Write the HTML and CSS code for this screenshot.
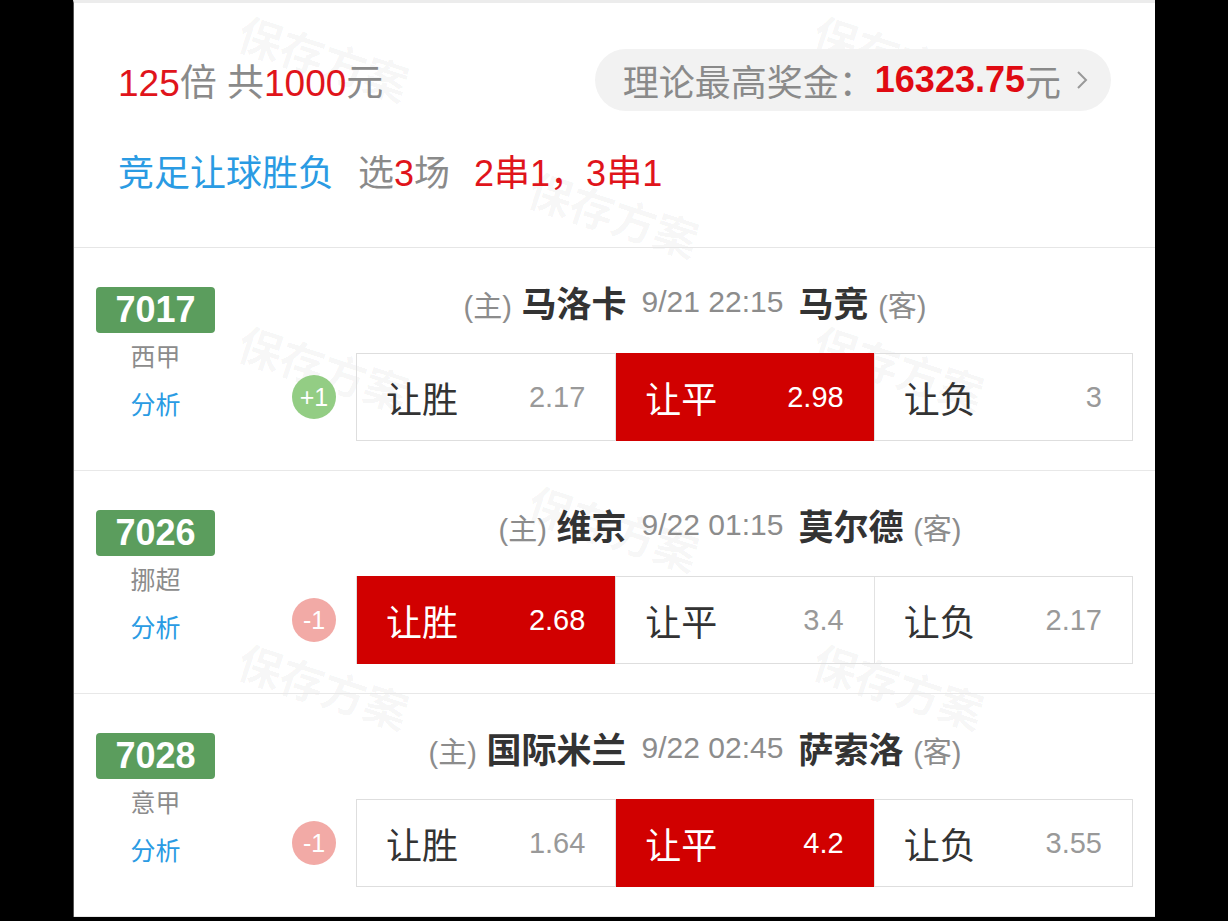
FILE: index.html
```html
<!DOCTYPE html>
<html lang="zh-CN">
<head>
    <meta charset="UTF-8">
    <meta name="viewport" content="width=device-width, initial-scale=1.0">
    <title>方案详情</title>
    <link rel="stylesheet" href="styles.css">
</head>
<body>
    <div class="page">
        <div class="watermarks" aria-hidden="true">
            <span class="wm wm-a">保存方案</span>
            <span class="wm wm-b">保存方案</span>
            <span class="wm wm-c">保存方案</span>
            <span class="wm wm-d">保存方案</span>
            <span class="wm wm-e">保存方案</span>
            <span class="wm wm-f">保存方案</span>
            <span class="wm wm-g">保存方案</span>
            <span class="wm wm-h">保存方案</span>
        </div>

        <section class="summary">
            <div class="summary-top">
                <div class="stake"><em>125</em>倍 共<em>1000</em>元</div>
                <a class="prize" href="#">
                    理论最高奖金：<strong>16323.75</strong>元
                    <svg class="chevron" viewBox="0 0 14 24" width="14" height="24">
                        <polyline points="3,4 11,12 3,20" fill="none" stroke="#999" stroke-width="2"/>
                    </svg>
                </a>
            </div>
            <div class="summary-type">
                <span class="play">竞足让球胜负</span>
                <span class="pick">选<em>3</em>场</span>
                <span class="pass">2串1，3串1</span>
            </div>
        </section>

        <div class="match">
            <div class="match-side">
                <span class="match-no">7017</span>
                <span class="league">西甲</span>
                <a class="analysis" href="#">分析</a>
            </div>
            <div class="match-main">
                <div class="match-title">
                    <span class="home"><i>(主)</i> 马洛卡</span>
                    <span class="time">9/21 22:15</span>
                    <span class="away">马竞 <i>(客)</i></span>
                </div>
                <div class="odds-row">
                    <span class="handicap plus">+1</span>
                    <div class="odds">
                        <div class="odd"><span>让胜</span><b>2.17</b></div>
                        <div class="odd selected"><span>让平</span><b>2.98</b></div>
                        <div class="odd"><span>让负</span><b>3</b></div>
                    </div>
                </div>
            </div>
        </div>

        <div class="match">
            <div class="match-side">
                <span class="match-no">7026</span>
                <span class="league">挪超</span>
                <a class="analysis" href="#">分析</a>
            </div>
            <div class="match-main">
                <div class="match-title">
                    <span class="home"><i>(主)</i> 维京</span>
                    <span class="time">9/22 01:15</span>
                    <span class="away">莫尔德 <i>(客)</i></span>
                </div>
                <div class="odds-row">
                    <span class="handicap minus">-1</span>
                    <div class="odds">
                        <div class="odd selected"><span>让胜</span><b>2.68</b></div>
                        <div class="odd"><span>让平</span><b>3.4</b></div>
                        <div class="odd"><span>让负</span><b>2.17</b></div>
                    </div>
                </div>
            </div>
        </div>

        <div class="match">
            <div class="match-side">
                <span class="match-no">7028</span>
                <span class="league">意甲</span>
                <a class="analysis" href="#">分析</a>
            </div>
            <div class="match-main">
                <div class="match-title">
                    <span class="home"><i>(主)</i> 国际米兰</span>
                    <span class="time">9/22 02:45</span>
                    <span class="away">萨索洛 <i>(客)</i></span>
                </div>
                <div class="odds-row">
                    <span class="handicap minus">-1</span>
                    <div class="odds">
                        <div class="odd"><span>让胜</span><b>1.64</b></div>
                        <div class="odd selected"><span>让平</span><b>4.2</b></div>
                        <div class="odd"><span>让负</span><b>3.55</b></div>
                    </div>
                </div>
            </div>
        </div>
    </div>
</body>
</html>
```

FILE: styles.css
```css
body {
    margin: 0;
    background: #000;
    font-family: "Liberation Sans", "Noto Sans CJK SC", sans-serif;
    color: #333;
}

a {
    text-decoration: none;
}

em, i {
    font-style: normal;
}

.page {
    position: relative;
    width: 1082px;
    margin: 0 auto;
    background: #fff;
    border-top: 3px solid #ececec;
    border-left: 1px solid #555;
    box-sizing: border-box;
    overflow: hidden;
}

/* faint "保存方案" stamps over the page */
.watermarks {
    position: absolute;
    inset: 0;
    pointer-events: none;
}

.wm {
    position: absolute;
    font-size: 44px;
    font-weight: bold;
    color: rgba(0,0,0,0.04);
    transform: rotate(18deg);
    white-space: nowrap;
}

.wm-a { left: 162px; top: 22px; }
.wm-b { left: 737px; top: 22px; }
.wm-c { left: 452px; top: 178px; }
.wm-d { left: 162px; top: 332px; }
.wm-e { left: 737px; top: 332px; }
.wm-f { left: 452px; top: 492px; }
.wm-g { left: 162px; top: 650px; }
.wm-h { left: 737px; top: 650px; }

.summary {
    position: relative;
    padding: 46px 44px 55px;
    border-bottom: 1px solid #e6e6e6;
}

.summary-top {
    display: flex;
    justify-content: space-between;
    align-items: center;
    height: 62px;
}

.stake {
    font-size: 37px;
    color: #8a8a8a;
}

.stake em {
    color: #e0141b;
}

.prize {
    display: flex;
    align-items: center;
    height: 62px;
    padding: 0 22px 0 28px;
    border-radius: 31px;
    background: #f2f2f2;
    font-size: 36px;
    color: #8a8a8a;
}

.prize strong {
    color: #e00a12;
    font-size: 36px;
}

.chevron {
    margin-left: 14px;
}

.summary-type {
    display: flex;
    align-items: center;
    gap: 24px;
    margin-top: 37px;
    height: 44px;
    font-size: 36px;
}

.play {
    color: #2a9be3;
}

.pick {
    color: #8a8a8a;
}

.pick em,
.pass {
    color: #e0141b;
}

.match {
    position: relative;
    display: flex;
    height: 222px;
    border-bottom: 1px solid #e8e8e8;
}

.match-side {
    width: 163px;
    padding-top: 39px;
    display: flex;
    flex-direction: column;
    align-items: center;
}

.match-no {
    width: 119px;
    height: 46px;
    line-height: 46px;
    text-align: center;
    background: #5b9d5d;
    border-radius: 4px;
    color: #fff;
    font-size: 36px;
    font-weight: bold;
}

.league,
.analysis {
    font-size: 25px;
    line-height: 34px;
}

.league {
    margin-top: 7px;
    color: #8c8c8c;
}

.analysis {
    margin-top: 14px;
    color: #2a9be3;
}

.match-main {
    flex: 1;
    margin-left: 55px;
    padding: 28px 22px 0 0;
}

.match-title {
    display: grid;
    grid-template-columns: 1fr auto 1fr;
    gap: 15px;
    align-items: center;
    height: 44px;
    white-space: nowrap;
}

.home {
    justify-self: end;
}

.away {
    justify-self: start;
}

.home,
.away {
    font-size: 35px;
    font-weight: bold;
    color: #333;
}

.home i,
.away i {
    font-size: 29px;
    font-weight: normal;
    color: #8c8c8c;
}

.time {
    font-size: 30px;
    color: #8c8c8c;
}

.odds-row {
    display: flex;
    align-items: center;
    gap: 20px;
    margin-top: 33px;
}

.handicap {
    width: 44px;
    height: 44px;
    line-height: 44px;
    border-radius: 50%;
    text-align: center;
    color: #fff;
    font-size: 25px;
    flex-shrink: 0;
}

.handicap.plus { background: #93cd84; }
.handicap.minus { background: #f2aaa6; }

.odds {
    flex: 1;
    display: grid;
    grid-template-columns: repeat(3, 1fr);
    height: 86px;
    border: 1px solid #dedede;
}

.odd {
    display: flex;
    justify-content: space-between;
    align-items: center;
    padding: 0 30px 0 29px;
}

.odd + .odd {
    border-left: 1px solid #e2e2e2;
}

.odd span {
    font-size: 36px;
    color: #333;
}

.odd b {
    font-size: 29px;
    font-weight: normal;
    color: #999;
}

.odd.selected {
    margin: -1px 0;
    background: #d10000;
}

.odd.selected span,
.odd.selected b {
    color: #fff;
}
```
